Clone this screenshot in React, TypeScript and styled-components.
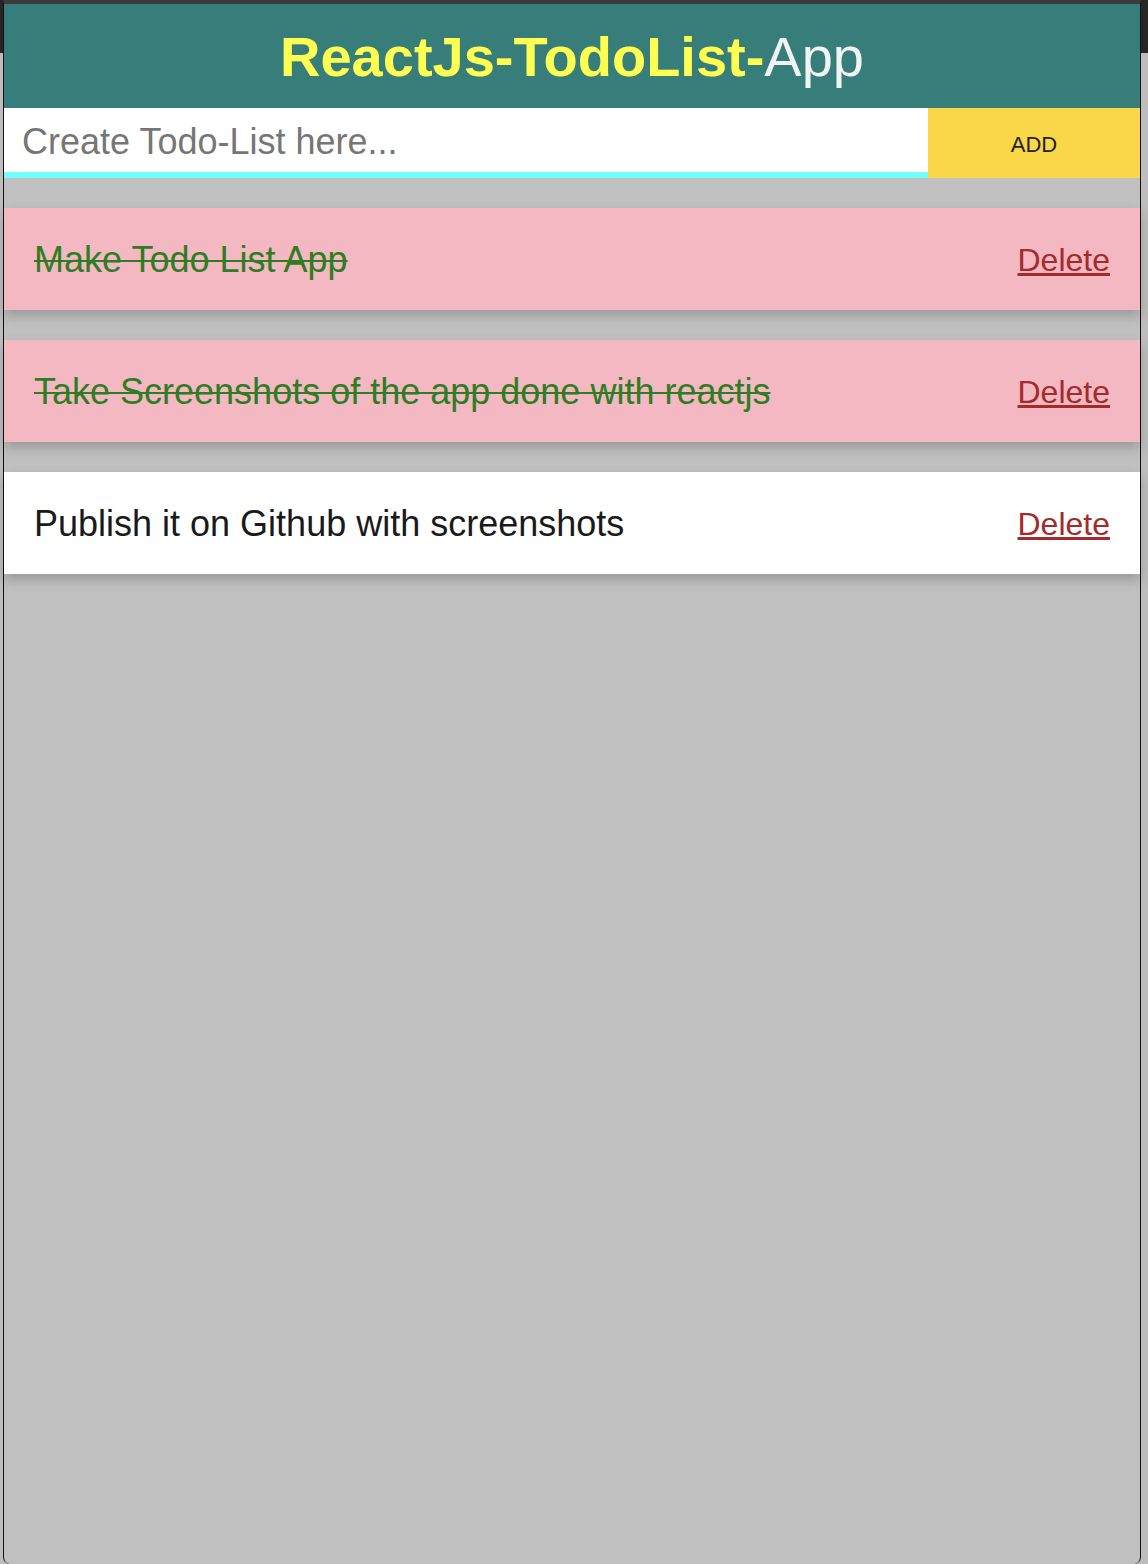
import React, { useState } from "react";
import styled, { createGlobalStyle } from "styled-components";

const GlobalStyle = createGlobalStyle`
  html, body {
    margin: 0;
    padding: 0;
  }
  body {
    font-family: "Liberation Sans", Arial, Helvetica, sans-serif;
    background: linear-gradient(#262626 0 53px, #bdbdbd 53px);
  }
  * { box-sizing: border-box; }
`;

const Desktop = styled.div`
  display: flex;
  height: 1564px;
  padding-left: 3px;
  overflow: hidden;
`;

const Window = styled.div`
  width: 1138px;
  height: 1564px;
  display: flex;
  flex-direction: column;
  background: #c0c0c0;
  border-left: 1px solid #111;
  border-right: 1px solid #111;
  border-top: 4px solid #3b3b3b;
  border-bottom-left-radius: 7px;
  border-bottom-right-radius: 7px;
`;

const Header = styled.header`
  height: 104px;
  display: flex;
  align-items: center;
  justify-content: center;
  padding-top: 3px;
  background: #377e7b;
`;

const Title = styled.h1`
  margin: 0;
  font-family: "Liberation Sans", Arial, Helvetica, sans-serif;
  font-size: 56px;
  font-weight: 400;
  color: #f1f4f4;
  line-height: 1.15;
`;

const TitleStrong = styled.span`
  font-weight: 700;
  color: #ffff52;
`;

const InputRow = styled.form`
  display: flex;
  height: 70px;
  margin: 0;
`;

const TodoInput = styled.input`
  flex: 1;
  min-width: 0;
  height: 70px;
  margin: 0;
  border: none;
  border-bottom: 6px solid #70fffb;
  border-radius: 0;
  outline: none;
  padding: 4px 18px 0;
  background: #fff;
  font-family: "Liberation Sans", Arial, Helvetica, sans-serif;
  font-size: 36px;
  color: #222;
  &::placeholder {
    color: #767676;
  }
`;

const AddButton = styled.button`
  width: 212px;
  height: 70px;
  margin: 0;
  padding: 3px 0 0;
  border: none;
  border-radius: 0;
  background: #fad749;
  font-family: "Liberation Sans", Arial, Helvetica, sans-serif;
  font-size: 22px;
  color: #222;
  cursor: pointer;
`;

const List = styled.ul`
  list-style: none;
  margin: 0;
  padding: 30px 0 0;
  display: flex;
  flex-direction: column;
  gap: 30px;
`;

const Item = styled.li<{ $done: boolean }>`
  display: flex;
  align-items: center;
  justify-content: space-between;
  padding: 31px 30px 29px;
  background: ${(p) => (p.$done ? "#f4b8c2" : "#ffffff")};
  box-shadow: 0 6px 12px rgba(0, 0, 0, 0.2);
`;

const ItemText = styled.span<{ $done: boolean }>`
  font-size: 36px;
  line-height: 42px;
  color: ${(p) => (p.$done ? "#2e7d22" : "#1a1a1a")};
  text-decoration: ${(p) => (p.$done ? "line-through" : "none")};
  text-decoration-thickness: 2px;
  cursor: pointer;
`;

const DeleteLink = styled.a`
  font-size: 32px;
  line-height: 42px;
  color: #a52a2a;
  text-decoration: underline;
  cursor: pointer;
`;

type Todo = { id: number; text: string; done: boolean };

const initial: Todo[] = [
  { id: 1, text: "Make Todo List App", done: true },
  { id: 2, text: "Take Screenshots of the app done with reactjs", done: true },
  { id: 3, text: "Publish it on Github with screenshots", done: false },
];

export default function App() {
  const [todos, setTodos] = useState<Todo[]>(initial);
  const [value, setValue] = useState("");

  const add = (e: React.FormEvent) => {
    e.preventDefault();
    if (!value.trim()) return;
    setTodos((t) => [...t, { id: Date.now(), text: value.trim(), done: false }]);
    setValue("");
  };

  return (
    <>
      <GlobalStyle />
      <Desktop>
        <Window>
          <Header>
            <Title>
              <TitleStrong>ReactJs-TodoList-</TitleStrong>App
            </Title>
          </Header>
          <InputRow onSubmit={add}>
            <TodoInput
              placeholder="Create Todo-List here..."
              value={value}
              onChange={(e) => setValue(e.target.value)}
            />
            <AddButton type="submit">ADD</AddButton>
          </InputRow>
          <List>
            {todos.map((t) => (
              <Item key={t.id} $done={t.done}>
                <ItemText
                  $done={t.done}
                  onClick={() =>
                    setTodos((all) =>
                      all.map((x) => (x.id === t.id ? { ...x, done: !x.done } : x))
                    )
                  }
                >
                  {t.text}
                </ItemText>
                <DeleteLink
                  onClick={() => setTodos((all) => all.filter((x) => x.id !== t.id))}
                >
                  Delete
                </DeleteLink>
              </Item>
            ))}
          </List>
        </Window>
      </Desktop>
    </>
  );
}
